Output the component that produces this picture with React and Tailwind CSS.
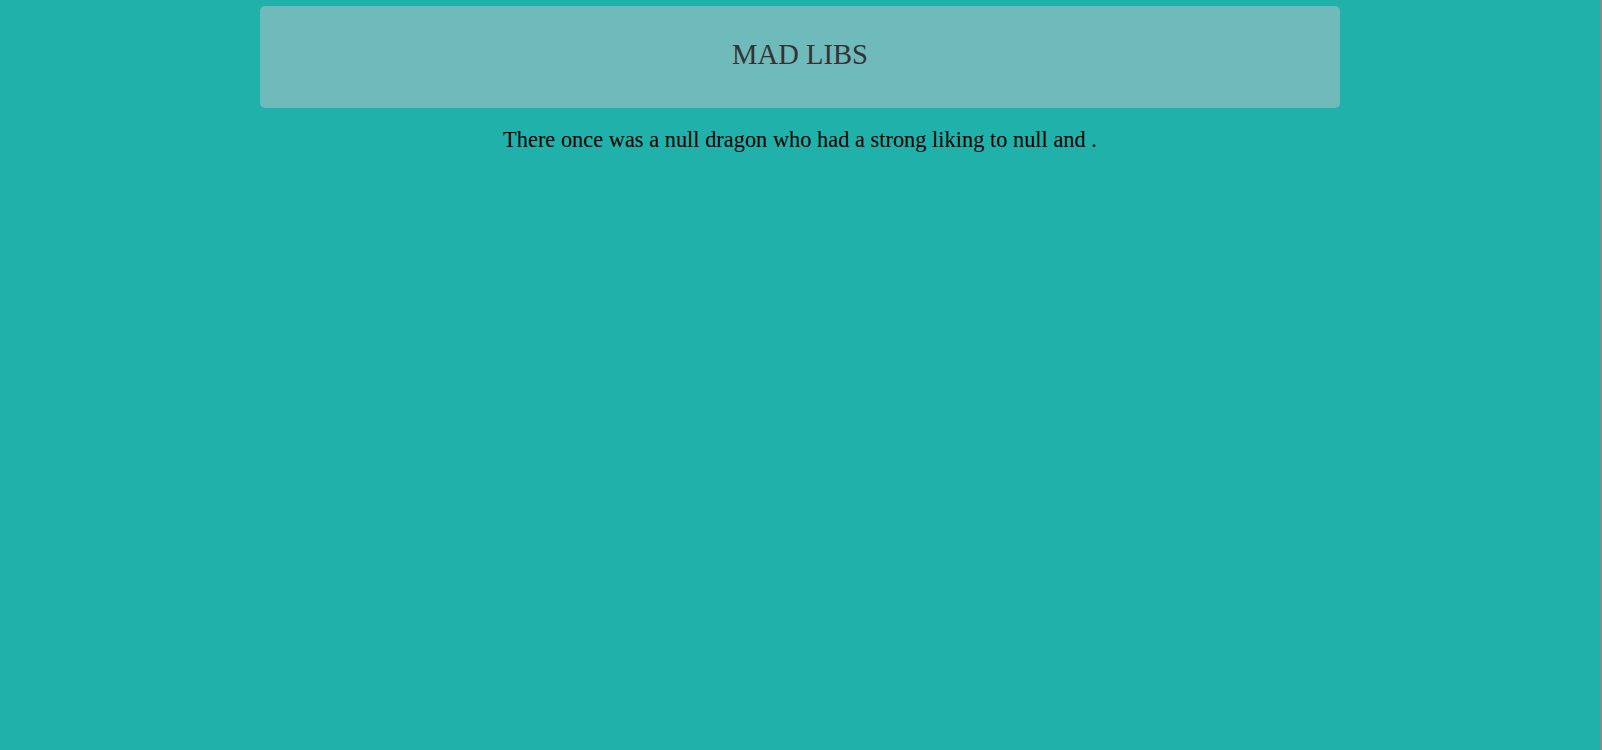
import React from 'react';

const story = 'There once was a null dragon who had a strong liking to null and .';

export default function App() {
  return (
    <div className="flex min-h-[750px] w-full bg-[#20b2aa]" style={{ fontFamily: '"Liberation Serif", "Times New Roman", serif' }}>
      <div className="flex-1 flex flex-col items-center">
        <header className="mt-[6px] w-[1080px] h-[102px] rounded-[5px] bg-[#6fbabb] pt-[35px] text-center">
          <h1 className="text-[28.6px] leading-none text-[#333333]">MAD LIBS</h1>
        </header>
        <p className="mt-[21px] text-[22.4px] leading-none text-black">{story}</p>
      </div>
      <div className="w-[2px] bg-[#8a8a8a]" />
    </div>
  );
}
